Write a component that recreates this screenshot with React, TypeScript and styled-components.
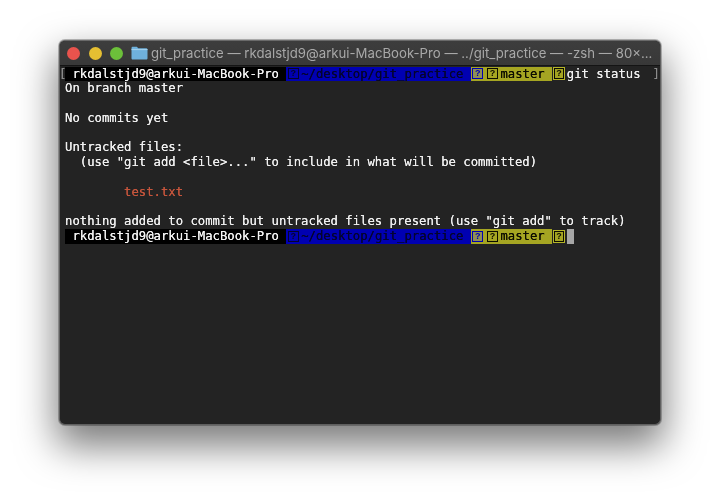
import React from 'react';
import styled, { createGlobalStyle } from 'styled-components';

const CELL = 7.38;

const GlobalStyle = createGlobalStyle`
  html, body {
    margin: 0;
    padding: 0;
    background: #fff;
  }
`;

const Page = styled.div`
  width: 720px;
  height: 503px;
  padding: 40px 59px 78px;
  box-sizing: border-box;
  overflow: hidden;
`;

const Window = styled.div`
  width: 602px;
  height: 385px;
  box-sizing: border-box;
  display: flex;
  flex-direction: column;
  border-radius: 6px;
  overflow: hidden;
  background: #232323;
  border: 1px solid #5f5f5f;
  border-top-color: #6a6a6a;
  box-shadow: 0 18px 38px 3px rgba(0, 0, 0, 0.52), 0 0 0 1px rgba(0, 0, 0, 0.25);
`;

const TitleBar = styled.div`
  height: 24px;
  flex-shrink: 0;
  display: flex;
  align-items: center;
  padding-left: 7px;
  background: linear-gradient(#3d3d3d, #383838);
  border-bottom: 1px solid #141414;
  filter: blur(0.25px);
`;

const Light = styled.span<{ $color: string }>`
  width: 13px;
  height: 13px;
  flex-shrink: 0;
  border-radius: 50%;
  margin-right: 8.5px;
  background: ${(p) => p.$color};
`;

const FolderIcon = styled.svg`
  width: 17px;
  height: 14px;
  margin: 0 3px 0 -0.5px;
  flex-shrink: 0;
`;

const Title = styled.span`
  font-family: Inter, 'Liberation Sans', sans-serif;
  font-size: 13.2px;
  color: #a8a8a8;
  white-space: nowrap;
`;

const Terminal = styled.div`
  flex: 1;
  padding: 0.6px 0 0 5px;
  font-family: 'DejaVu Sans Mono', monospace;
  font-size: 12.25px;
  line-height: 14.76px;
  color: #f0f0f0;
  text-shadow: 0 0 0.3px currentColor;
  filter: blur(0.3px);
`;

const Line = styled.div`
  height: 14.76px;
  white-space: pre;
`;

const PromptRow = styled.div`
  display: flex;
  height: 14.76px;
  margin-left: -5px;
  padding-right: 2px;
  white-space: pre;
`;

const Bracket = styled.span<{ $right?: boolean }>`
  width: 6px;
  letter-spacing: -2px;
  margin-left: -1px;
  color: #8c8c8c;
  ${(p) => (p.$right ? 'margin-left: auto; text-align: right;' : '')}
`;

const Segment = styled.span<{ $bg: string; $fg: string; $cells: number }>`
  display: flex;
  align-items: center;
  width: ${(p) => p.$cells * CELL}px;
  background: ${(p) => p.$bg};
  color: ${(p) => p.$fg};
  flex-shrink: 0;
`;

const MissingGlyph = styled.span<{ $bg: string; $edge: string; $halo?: string }>`
  width: ${CELL * 2 - 4}px;
  height: 11px;
  margin: 0 2.5px 0 1.5px;
  box-sizing: border-box;
  border: 1px solid ${(p) => p.$edge};
  background: ${(p) => p.$bg};
  color: ${(p) => p.$edge};
  font-family: 'Liberation Sans', sans-serif;
  font-size: 9px;
  font-weight: 700;
  line-height: 9px;
  text-align: center;
  text-shadow: none;
  flex-shrink: 0;
  ${(p) => (p.$halo ? `box-shadow: 0 0 0 1px ${p.$halo};` : '')}
`;

const Red = styled(Line)`
  color: #c5553c;
`;

const Cursor = styled.span`
  width: ${CELL}px;
  background: #a6a6a6;
  flex-shrink: 0;
`;

const BLUE = '#0000b2';
const YELLOW = '#a5a522';

const PromptSegments = () => (
  <>
    <Segment $bg="#000" $fg="#f4f4f4" $cells={30}> rkdalstjd9@arkui-MacBook-Pro </Segment>
    <Segment $bg={BLUE} $fg="#04042e" $cells={25}>
      <MissingGlyph $bg={BLUE} $edge="#04042e">?</MissingGlyph>
      ~/desktop/git_practice
    </Segment>
    <Segment $bg={YELLOW} $fg="#0c0c00" $cells={11}>
      <MissingGlyph $bg="#8f8f55" $edge="#0000b2">?</MissingGlyph>
      <MissingGlyph $bg={YELLOW} $edge="#0c0c00">?</MissingGlyph>
      master
    </Segment>
    <Segment $bg="transparent" $fg="#0c0c00" $cells={2}>
      <MissingGlyph $bg={YELLOW} $edge="#0c0c00" $halo="#b5b528">?</MissingGlyph>
    </Segment>
  </>
);

export default function App() {
  return (
    <Page>
      <GlobalStyle />
      <Window>
        <TitleBar>
          <Light $color="#e9534d" />
          <Light $color="#e5bf32" />
          <Light $color="#6cc03a" />
          <FolderIcon viewBox="0 0 17 14">
            <path d="M0.5 2.2C0.5 1.3 1.1 0.8 2 0.8H5.8L7.3 2.2H15C16 2.2 16.5 2.8 16.5 3.6V12.2C16.5 13 16 13.5 15.2 13.5H1.8C1 13.5 0.5 13 0.5 12.2Z" fill="#6fb1dc" />
            <path d="M0.5 3.6H16.5" stroke="#a5d2ef" strokeWidth="1" />
          </FolderIcon>
          <Title>git_practice — rkdalstjd9@arkui-MacBook-Pro — ../git_practice — -zsh — 80×...</Title>
        </TitleBar>
        <Terminal>
          <PromptRow>
            <Bracket>[</Bracket>
            <PromptSegments />
            <span>git status</span>
            <Bracket $right>]</Bracket>
          </PromptRow>
          <Line>On branch master</Line>
          <Line> </Line>
          <Line>No commits yet</Line>
          <Line> </Line>
          <Line>Untracked files:</Line>
          <Line>  (use "git add &lt;file&gt;..." to include in what will be committed)</Line>
          <Line> </Line>
          <Red>        test.txt</Red>
          <Line> </Line>
          <Line>nothing added to commit but untracked files present (use "git add" to track)</Line>
          <PromptRow>
            <Bracket />
            <PromptSegments />
            <Cursor />
          </PromptRow>
        </Terminal>
      </Window>
    </Page>
  );
}
